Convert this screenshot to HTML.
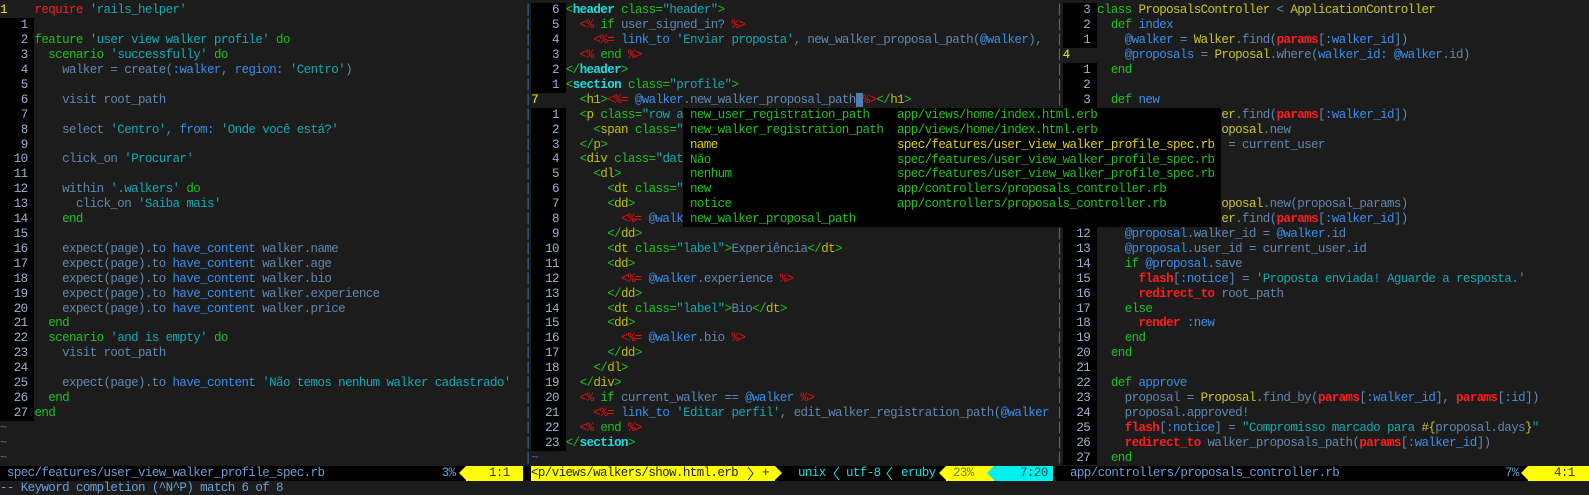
<!DOCTYPE html>
<html><head><meta charset="utf-8">
<style>
html,body{margin:0;padding:0;background:#1c1c1c;width:1589px;height:495px;overflow:hidden;position:relative}
*{font-family:"Liberation Mono",monospace;font-size:12.5px;letter-spacing:-0.6px}
.p{position:absolute;top:3.4px;overflow:hidden;white-space:normal;color:#5f87af}
.r{height:14.91px;line-height:14.91px;white-space:pre}
.n{display:inline-block;width:27.6px;padding-right:6.9px;text-align:right;background:#000;color:#9fb0d0}
.cn{display:inline-block;width:34.5px;color:#f0f000}
.k{color:#1fc21f}.s{color:#14a9b2}.R{color:#ff1c1c;font-weight:bold}.rd{color:#ff1c1c}
.E{color:#e81010}.v{color:#3a8ee8}.y{color:#c8c81e}.C{color:#19dede;font-weight:bold}
.t{color:#bcc000}.tl{color:#3a6ea5}
.sep{position:absolute;top:3.4px;color:#3a6ea5;white-space:normal}
.pop{position:absolute;left:683.1px;top:107.8px;width:538px;height:119.3px;background:#000;white-space:normal}
.pop .r{position:relative;color:#1fc21f}
.pop .a{position:absolute;left:6.9px}
.pop .b{position:absolute;left:213.9px}
.st{position:absolute;top:465.7px;height:14.91px;line-height:14.91px;white-space:pre}
.tri{position:absolute;top:465.7px;width:0;height:0;border-top:7.45px solid transparent;border-bottom:7.45px solid transparent}
</style></head><body>
<div style="position:absolute;left:0;top:465.7px;width:1589px;height:14.91px;background:#000"></div>

<div class="p" style="left:0;width:524px">
<div class="r"><span class="cn">1</span><span class="rd">require</span> <span class="s">'rails_helper'</span></div>
<div class="r"><span class="n">1</span></div>
<div class="r"><span class="n">2</span><span class="k">feature</span> <span class="s">'user view walker profile'</span> <span class="k">do</span></div>
<div class="r"><span class="n">3</span>  <span class="k">scenario</span> <span class="s">'successfully'</span> <span class="k">do</span></div>
<div class="r"><span class="n">4</span>    walker = create(<span class="v">:walker</span>, <span class="v">region:</span> <span class="s">'Centro'</span>)</div>
<div class="r"><span class="n">5</span></div>
<div class="r"><span class="n">6</span>    visit root_path</div>
<div class="r"><span class="n">7</span></div>
<div class="r"><span class="n">8</span>    select <span class="s">'Centro'</span>, <span class="v">from:</span> <span class="s">'Onde você está?'</span></div>
<div class="r"><span class="n">9</span></div>
<div class="r"><span class="n">10</span>    click_on <span class="s">'Procurar'</span></div>
<div class="r"><span class="n">11</span></div>
<div class="r"><span class="n">12</span>    within <span class="s">'.walkers'</span> <span class="k">do</span></div>
<div class="r"><span class="n">13</span>      click_on <span class="s">'Saiba mais'</span></div>
<div class="r"><span class="n">14</span>    <span class="k">end</span></div>
<div class="r"><span class="n">15</span></div>
<div class="r"><span class="n">16</span>    expect(page).to <span class="v">have_content</span> walker.name</div>
<div class="r"><span class="n">17</span>    expect(page).to <span class="v">have_content</span> walker.age</div>
<div class="r"><span class="n">18</span>    expect(page).to <span class="v">have_content</span> walker.bio</div>
<div class="r"><span class="n">19</span>    expect(page).to <span class="v">have_content</span> walker.experience</div>
<div class="r"><span class="n">20</span>    expect(page).to <span class="v">have_content</span> walker.price</div>
<div class="r"><span class="n">21</span>  <span class="k">end</span></div>
<div class="r"><span class="n">22</span>  <span class="k">scenario</span> <span class="s">'and is empty'</span> <span class="k">do</span></div>
<div class="r"><span class="n">23</span>    visit root_path</div>
<div class="r"><span class="n">24</span></div>
<div class="r"><span class="n">25</span>    expect(page).to <span class="v">have_content</span> <span class="s">'Não temos nenhum walker cadastrado'</span></div>
<div class="r"><span class="n">26</span>  <span class="k">end</span></div>
<div class="r"><span class="n">27</span><span class="k">end</span></div>
<div class="r tl">~</div>
<div class="r tl">~</div>
<div class="r tl">~</div>
</div>

<div class="sep" style="left:524.4px"><div class="r">|</div><div class="r">|</div><div class="r">|</div><div class="r">|</div><div class="r">|</div><div class="r">|</div><div class="r">|</div><div class="r">|</div><div class="r">|</div><div class="r">|</div><div class="r">|</div><div class="r">|</div><div class="r">|</div><div class="r">|</div><div class="r">|</div><div class="r">|</div><div class="r">|</div><div class="r">|</div><div class="r">|</div><div class="r">|</div><div class="r">|</div><div class="r">|</div><div class="r">|</div><div class="r">|</div><div class="r">|</div><div class="r">|</div><div class="r">|</div><div class="r">|</div><div class="r">|</div><div class="r">|</div><div class="r">|</div></div>
<div class="sep" style="left:1055.7px"><div class="r">|</div><div class="r">|</div><div class="r">|</div><div class="r">|</div><div class="r">|</div><div class="r">|</div><div class="r">|</div><div class="r">|</div><div class="r">|</div><div class="r">|</div><div class="r">|</div><div class="r">|</div><div class="r">|</div><div class="r">|</div><div class="r">|</div><div class="r">|</div><div class="r">|</div><div class="r">|</div><div class="r">|</div><div class="r">|</div><div class="r">|</div><div class="r">|</div><div class="r">|</div><div class="r">|</div><div class="r">|</div><div class="r">|</div><div class="r">|</div><div class="r">|</div><div class="r">|</div><div class="r">|</div><div class="r">|</div></div>

<div class="p" style="left:531.3px;width:524.4px">
<div class="r"><span class="n">6</span><span class="k">&lt;</span><span class="C">header</span> <span class="k">class=</span><span class="s">"header"</span><span class="k">&gt;</span></div>
<div class="r"><span class="n">5</span>  <span class="E">&lt;%</span> <span class="k">if</span> user_signed_in? <span class="E">%&gt;</span></div>
<div class="r"><span class="n">4</span>    <span class="E">&lt;%=</span> <span class="v">link_to</span> <span class="s">'Enviar proposta'</span>, new_walker_proposal_path(<span class="v">@walker</span>),</div>
<div class="r"><span class="n">3</span>  <span class="E">&lt;%</span> <span class="k">end</span> <span class="E">%&gt;</span></div>
<div class="r"><span class="n">2</span><span class="k">&lt;/</span><span class="C">header</span><span class="k">&gt;</span></div>
<div class="r"><span class="n">1</span><span class="k">&lt;</span><span class="C">section</span> <span class="k">class=</span><span class="s">"profile"</span><span class="k">&gt;</span></div>
<div class="r"><span class="cn">7</span>  <span class="k">&lt;</span><span class="t">h1</span><span class="k">&gt;</span><span class="E">&lt;%=</span> <span class="v">@walker</span>.new_walker_proposal_path<span style="background:#4f7fb0"> </span><span class="E">%&gt;</span><span class="k">&lt;/</span><span class="t">h1</span><span class="k">&gt;</span></div>
<div class="r"><span class="n">1</span>  <span class="k">&lt;</span><span class="t">p</span> <span class="k">class=</span><span class="s">"row align"</span></div>
<div class="r"><span class="n">2</span>    <span class="k">&lt;</span><span class="t">span</span> <span class="k">class=</span><span class="s">"label"</span></div>
<div class="r"><span class="n">3</span>  <span class="k">&lt;/</span><span class="t">p</span><span class="k">&gt;</span></div>
<div class="r"><span class="n">4</span>  <span class="k">&lt;</span><span class="t">div</span> <span class="k">class=</span><span class="s">"data"</span></div>
<div class="r"><span class="n">5</span>    <span class="k">&lt;</span><span class="t">dl</span><span class="k">&gt;</span></div>
<div class="r"><span class="n">6</span>      <span class="k">&lt;</span><span class="t">dt</span> <span class="k">class=</span><span class="s">"label"</span></div>
<div class="r"><span class="n">7</span>      <span class="k">&lt;</span><span class="t">dd</span><span class="k">&gt;</span></div>
<div class="r"><span class="n">8</span>        <span class="E">&lt;%=</span> <span class="v">@walker</span></div>
<div class="r"><span class="n">9</span>      <span class="k">&lt;/</span><span class="t">dd</span><span class="k">&gt;</span></div>
<div class="r"><span class="n">10</span>      <span class="k">&lt;</span><span class="t">dt</span> <span class="k">class=</span><span class="s">"label"</span><span class="k">&gt;</span>Experiência<span class="k">&lt;/</span><span class="t">dt</span><span class="k">&gt;</span></div>
<div class="r"><span class="n">11</span>      <span class="k">&lt;</span><span class="t">dd</span><span class="k">&gt;</span></div>
<div class="r"><span class="n">12</span>        <span class="E">&lt;%=</span> <span class="v">@walker</span>.experience <span class="E">%&gt;</span></div>
<div class="r"><span class="n">13</span>      <span class="k">&lt;/</span><span class="t">dd</span><span class="k">&gt;</span></div>
<div class="r"><span class="n">14</span>      <span class="k">&lt;</span><span class="t">dt</span> <span class="k">class=</span><span class="s">"label"</span><span class="k">&gt;</span>Bio<span class="k">&lt;/</span><span class="t">dt</span><span class="k">&gt;</span></div>
<div class="r"><span class="n">15</span>      <span class="k">&lt;</span><span class="t">dd</span><span class="k">&gt;</span></div>
<div class="r"><span class="n">16</span>        <span class="E">&lt;%=</span> <span class="v">@walker</span>.bio <span class="E">%&gt;</span></div>
<div class="r"><span class="n">17</span>      <span class="k">&lt;/</span><span class="t">dd</span><span class="k">&gt;</span></div>
<div class="r"><span class="n">18</span>    <span class="k">&lt;/</span><span class="t">dl</span><span class="k">&gt;</span></div>
<div class="r"><span class="n">19</span>  <span class="k">&lt;/</span><span class="t">div</span><span class="k">&gt;</span></div>
<div class="r"><span class="n">20</span>  <span class="E">&lt;%</span> <span class="k">if</span> current_walker == <span class="v">@walker</span> <span class="E">%&gt;</span></div>
<div class="r"><span class="n">21</span>    <span class="E">&lt;%=</span> <span class="v">link_to</span> <span class="s">'Editar perfil'</span>, edit_walker_registration_path(<span class="v">@walker</span></div>
<div class="r"><span class="n">22</span>  <span class="E">&lt;%</span> <span class="k">end</span> <span class="E">%&gt;</span></div>
<div class="r"><span class="n">23</span><span class="k">&lt;/</span><span class="C">section</span><span class="k">&gt;</span></div>
<div class="r tl">~</div>
</div>

<div class="p" style="left:1062.6px;width:527px">
<div class="r"><span class="n">3</span><span class="k">class</span> <span class="y">ProposalsController</span> &lt; <span class="y">ApplicationController</span></div>
<div class="r"><span class="n">2</span>  <span class="k">def</span> <span class="v">index</span></div>
<div class="r"><span class="n">1</span>    <span class="v">@walker</span> = <span class="y">Walker</span>.find(<span class="R">params</span>[<span class="v">:walker_id</span>])</div>
<div class="r"><span class="cn">4</span>    <span class="v">@proposals</span> = <span class="y">Proposal</span>.where(<span class="v">walker_id:</span> <span class="v">@walker</span>.id)</div>
<div class="r"><span class="n">1</span>  <span class="k">end</span></div>
<div class="r"><span class="n">2</span></div>
<div class="r"><span class="n">3</span>  <span class="k">def</span> <span class="v">new</span></div>
<div class="r"><span class="n">4</span>    <span class="v">@walker</span> = <span class="y">Walker</span>.find(<span class="R">params</span>[<span class="v">:walker_id</span>])</div>
<div class="r"><span class="n">5</span>    <span class="v">@proposal</span> = <span class="y">Proposal</span>.new</div>
<div class="r"><span class="n">6</span>    <span class="v">@proposal</span>.user = current_user</div>
<div class="r"><span class="n">7</span>  <span class="k">end</span></div>
<div class="r"><span class="n">8</span></div>
<div class="r"><span class="n">9</span>  <span class="k">def</span> <span class="v">create</span></div>
<div class="r"><span class="n">10</span>    <span class="v">@proposal</span> = <span class="y">Proposal</span>.new(proposal_params)</div>
<div class="r"><span class="n">11</span>    <span class="v">@walker</span> = <span class="y">Walker</span>.find(<span class="R">params</span>[<span class="v">:walker_id</span>])</div>
<div class="r"><span class="n">12</span>    <span class="v">@proposal</span>.walker_id = <span class="v">@walker</span>.id</div>
<div class="r"><span class="n">13</span>    <span class="v">@proposal</span>.user_id = current_user.id</div>
<div class="r"><span class="n">14</span>    <span class="k">if</span> <span class="v">@proposal</span>.save</div>
<div class="r"><span class="n">15</span>      <span class="R">flash</span>[<span class="v">:notice</span>] = <span class="s">'Proposta enviada! Aguarde a resposta.'</span></div>
<div class="r"><span class="n">16</span>      <span class="R">redirect_to</span> root_path</div>
<div class="r"><span class="n">17</span>    <span class="k">else</span></div>
<div class="r"><span class="n">18</span>      <span class="R">render</span> <span class="v">:new</span></div>
<div class="r"><span class="n">19</span>    <span class="k">end</span></div>
<div class="r"><span class="n">20</span>  <span class="k">end</span></div>
<div class="r"><span class="n">21</span></div>
<div class="r"><span class="n">22</span>  <span class="k">def</span> <span class="v">approve</span></div>
<div class="r"><span class="n">23</span>    proposal = <span class="y">Proposal</span>.find_by(<span class="R">params</span>[<span class="v">:walker_id</span>], <span class="R">params</span>[<span class="v">:id</span>])</div>
<div class="r"><span class="n">24</span>    proposal.approved!</div>
<div class="r"><span class="n">25</span>    <span class="R">flash</span>[<span class="v">:notice</span>] = <span class="s">"Compromisso marcado para </span><span class="y">#{</span>proposal.days<span class="y">}</span><span class="s">"</span></div>
<div class="r"><span class="n">26</span>    <span class="R">redirect_to</span> walker_proposals_path(<span class="R">params</span>[<span class="v">:walker_id</span>])</div>
<div class="r"><span class="n">27</span>  <span class="k">end</span></div>
</div>

<div class="pop">
<div class="r"><span class="a">new_user_registration_path</span><span class="b">app/views/home/index.html.erb</span></div>
<div class="r"><span class="a">new_walker_registration_path</span><span class="b">app/views/home/index.html.erb</span></div>
<div class="r" style="color:#e0d000"><span class="a">name</span><span class="b">spec/features/user_view_walker_profile_spec.rb</span></div>
<div class="r"><span class="a">Não</span><span class="b">spec/features/user_view_walker_profile_spec.rb</span></div>
<div class="r"><span class="a">nenhum</span><span class="b">spec/features/user_view_walker_profile_spec.rb</span></div>
<div class="r"><span class="a">new</span><span class="b">app/controllers/proposals_controller.rb</span></div>
<div class="r"><span class="a">notice</span><span class="b">app/controllers/proposals_controller.rb</span></div>
<div class="r"><span class="a">new_walker_proposal_path</span></div>
</div>

<div class="st" style="left:6.9px;color:#6a9fd8">spec/features/user_view_walker_profile_spec.rb</div>
<div class="st" style="left:441.6px;color:#6a9fd8">3%</div>
<div class="tri" style="left:459px;border-right:7px solid #ffff00"></div>
<div class="st" style="left:466px;width:57px;background:#ffff00;color:#333"><span style="position:absolute;left:23px">1:1</span></div>

<div class="st" style="left:531px;width:244px;background:#ffff00;color:#222">&lt;p/views/walkers/show.html.erb</div>
<svg style="position:absolute;left:746px;top:466px" width="10" height="15"><polyline points="2,1 7,7.5 2,14" fill="none" stroke="#333" stroke-width="1"/></svg>
<div class="st" style="left:762px;color:#222">+</div>
<div class="tri" style="left:775px;border-left:7px solid #ffff00"></div>
<div class="st" style="left:798px;color:#19dede">unix</div>
<svg style="position:absolute;left:831px;top:466px" width="10" height="15"><polyline points="8,1 3,7.5 8,14" fill="none" stroke="#19dede" stroke-width="1"/></svg>
<div class="st" style="left:846px;color:#19dede">utf-8</div>
<svg style="position:absolute;left:884px;top:466px" width="10" height="15"><polyline points="8,1 3,7.5 8,14" fill="none" stroke="#19dede" stroke-width="1"/></svg>
<div class="st" style="left:901px;color:#19dede">eruby</div>
<div class="tri" style="left:939px;border-right:7px solid #ffff00"></div>
<div class="st" style="left:946px;width:48px;background:#ffff00;color:#7a7a00"><span style="position:absolute;left:7px">23%</span></div>
<div class="tri" style="left:987px;border-right:7px solid #00f0f0"></div>
<div class="st" style="left:994px;width:59px;background:#00f0f0;color:#0a5a5a"><span style="position:absolute;left:26px">7:20</span></div>

<div class="st" style="left:1070px;color:#6a9fd8">app/controllers/proposals_controller.rb</div>
<div class="st" style="left:1505px;color:#6a9fd8">7%</div>
<div class="tri" style="left:1521px;border-right:7px solid #ffff00"></div>
<div class="st" style="left:1528px;width:61px;background:#ffff00;color:#333"><span style="position:absolute;left:26px">4:1</span></div>

<div class="st" style="left:0;top:480.6px;color:#6a9fd8">-- Keyword completion (^N^P) match 6 of 8</div>
</body></html>
